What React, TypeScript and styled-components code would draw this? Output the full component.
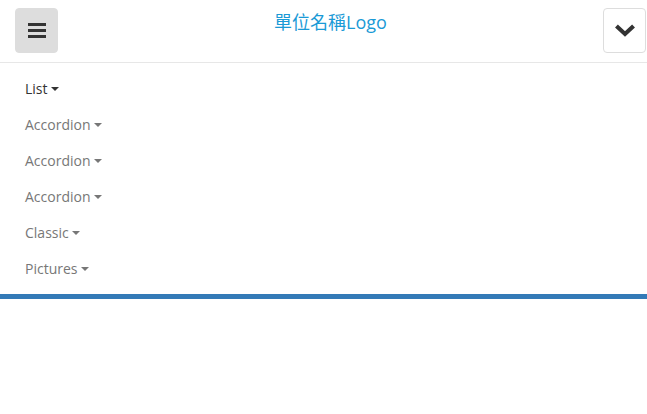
import React from "react";
import styled, { createGlobalStyle } from "styled-components";

const Global = createGlobalStyle`
  html, body { margin: 0; padding: 0; background: #fff; }
  body { font-family: "Open Sans", "Noto Sans CJK TC", sans-serif; font-size: 14px; color: #333; }
`;

const Header = styled.header`
  height: 63px;
  border-bottom: 1px solid #e7e7e7;
  display: flex;
  align-items: flex-start;
  justify-content: space-between;
  padding: 8px 1px 0 15px;
  box-sizing: border-box;
  position: relative;
`;

const IconButton = styled.button<{ $filled?: boolean }>`
  width: 43px;
  height: 45px;
  border-radius: 4px;
  border: 1px solid #ddd;
  background: ${(p) => (p.$filled ? "#ddd" : "#fff")};
  display: flex;
  align-items: center;
  justify-content: center;
  padding: 0;
  cursor: pointer;
`;

const Logo = styled.a`
  position: absolute;
  left: 14px;
  right: 0;
  top: 10px;
  text-align: center;
  font-size: 18px;
  line-height: 24px;
  color: #1a9ad6;
  text-decoration: none;
  font-family: "Open Sans", "Noto Sans CJK TC", sans-serif;
  pointer-events: none;
`;

const Menu = styled.ul`
  list-style: none;
  margin: 0;
  padding: 7px 0 8px;
  border-bottom: 5px solid #337ab7;
`;

const Item = styled.li<{ $active?: boolean }>`
  height: 36px;
  display: flex;
  align-items: center;
  padding-left: 25px;
  color: ${(p) => (p.$active ? "#333" : "#777")};
  font-size: 14px;
`;

const Caret = styled.span`
  display: inline-block;
  width: 0;
  height: 0;
  margin-left: 3px;
  margin-top: 2px;
  border-top: 4px solid currentColor;
  border-left: 4px solid transparent;
  border-right: 4px solid transparent;
`;

const items = ["List", "Accordion", "Accordion", "Accordion", "Classic", "Pictures"];

export default function App() {
  return (
    <>
      <Global />
      <Header>
        <IconButton $filled aria-label="menu">
          <svg width="18" height="17" viewBox="0 0 18 17">
            <rect x="0" y="1" width="18" height="3" fill="#333" />
            <rect x="0" y="7" width="18" height="3" fill="#333" />
            <rect x="0" y="13" width="18" height="3" fill="#333" />
          </svg>
        </IconButton>
        <Logo href="#">單位名稱Logo</Logo>
        <IconButton aria-label="toggle">
          <svg width="20" height="14" viewBox="0 0 20 14">
            <path d="M3 3.5 L10 10 L17 3.5" fill="none" stroke="#333" strokeWidth="4.2" strokeLinecap="square" />
          </svg>
        </IconButton>
      </Header>
      <Menu>
        {items.map((t, i) => (
          <Item key={i} $active={i === 0}>
            {t}
            <Caret />
          </Item>
        ))}
      </Menu>
    </>
  );
}
